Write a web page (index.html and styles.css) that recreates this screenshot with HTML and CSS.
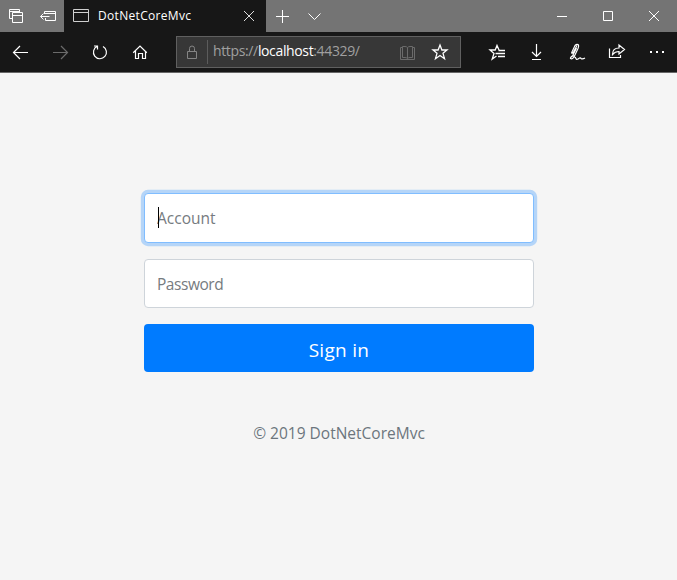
FILE: index.html
```html
<!DOCTYPE html>
<html lang="en">
<head>
<meta charset="utf-8">
<title>DotNetCoreMvc</title>
<link rel="stylesheet" href="styles.css">
</head>
<body>
<header class="titlebar">
  <div class="cell small"><svg width="32" height="32" viewBox="0 0 32 32"><path d="M12 18.500H9.500V9.500H19.500V12M9.500 11.500H19.500M12.500 12.500H22.500V22.500H12.500ZM12.500 15.500H22.500"/></svg></div>
  <div class="cell small"><svg width="32" height="32" viewBox="0 0 32 32"><path d="M12.500 14V11.500H23.500V20.500H13.500V18M12.500 13.500H23.500M8.500 16.500H17.500M11.500 13.500L8.500 16.500L11.500 19.500"/></svg></div>
  <div class="tab">
    <svg class="page-icon" width="16" height="14" viewBox="0 0 16 14"><path d="M.5 .5H15.500V12.500H.5ZM.5 3.500H15.500"/></svg>
    <span class="tab-title">DotNetCoreMvc</span>
    <svg class="tab-close" width="12" height="12" viewBox="0 0 12 12"><path d="M1 1L11 11M11 1L1 11"/></svg>
  </div>
  <div class="cell small"><svg width="32" height="32" viewBox="0 0 32 32"><path d="M16.500 10V23M10 16.500H23"/></svg></div>
  <div class="cell small"><svg width="32" height="32" viewBox="0 0 32 32"><path d="M10.500 13.500L16.500 19.500L22.500 13.500"/></svg></div>
  <div class="window-controls">
    <div class="cell wide"><svg width="46" height="32" viewBox="0 0 46 32"><path d="M18 16.500H28"/></svg></div>
    <div class="cell wide"><svg width="46" height="32" viewBox="0 0 46 32"><path d="M18.500 11.500H27.500V20.500H18.500Z"/></svg></div>
    <div class="cell wide"><svg width="46" height="32" viewBox="0 0 46 32"><path d="M18 11L28 21M28 11L18 21"/></svg></div>
  </div>
</header>
<nav class="toolbar">
  <div class="cell"><svg width="40" height="40" viewBox="0 0 40 40"><path stroke-width="1.200" d="M28 20.500H13.500M20 14L13.500 20.500L20 27"/></svg></div>
  <div class="cell disabled"><svg width="40" height="40" viewBox="0 0 40 40"><path stroke-width="1.200" d="M13 20.500H27.500M21 14L27.500 20.500L21 27"/></svg></div>
  <div class="cell"><svg width="40" height="40" viewBox="0 0 40 40"><path stroke-width="1.200" d="M14 14H17.500V17.500M17.300 14.300A6.500 6.500 0 1 0 23 14.500"/></svg></div>
  <div class="cell"><svg width="40" height="40" viewBox="0 0 40 40"><path stroke-width="1.200" d="M13.200 20.700L20 14L26.800 20.700M15.500 19V26.500H18.500V21.500H22.500V26.500H25.500V19"/></svg></div>
  <div class="address">
    <svg class="lock" width="12" height="15" viewBox="0 0 12 15"><path d="M1.500 6.500H10.500V13.500H1.500ZM3.500 6.500V3.500Q3.500 1 6 1T8.500 3.500V6.500"/></svg>
    <div class="url">https://<b>localhost</b>:44329/</div>
    <svg class="reader" width="16" height="15" viewBox="0 0 16 15"><path d="M7.500 2.500Q6.500 1.500 5 1.500H2.500V12.500H5Q6.500 12.500 7.500 13.500Q8.500 12.500 10 12.500H12.500V1.500H10Q8.500 1.500 7.500 2.500V13.500M2.500 2.500H.5V14.500H14.500V2.500H12.500"/></svg>
    <svg class="star" width="18" height="18" viewBox="0 0 18 18"><path stroke-width="1.300" d="M9 2L10.900 7H16L12 10.300L13.500 15.700L9 12.500L4.500 15.700L6 10.300L2 7H7.100Z"/></svg>
  </div>
  <div class="cell"><svg width="40" height="40" viewBox="0 0 40 40"><path stroke-width="1.300" d="M22 18L20 13.500L18.200 18H13L17 21.500L15.200 27L19.500 24M21.500 18.500H28M18.500 21.500H28M21 24.500H28"/></svg></div>
  <div class="cell"><svg width="40" height="40" viewBox="0 0 40 40"><path stroke-width="1.200" d="M19.500 12V24.500M15 20L19.500 24.500L24 20M15 27.500H24"/></svg></div>
  <div class="cell"><svg width="40" height="40" viewBox="0 0 40 40"><path stroke-width="1.200" d="M14.500 21L18 13.500Q20 11.500 21.500 13Q22 14 21 16.500L17 25Q15.500 27.500 13.500 26.500Q13 25.500 16 23.500L18.500 25.500Q19 28 21 27Q23.500 25 24 26.500Q25.500 27.500 28 26M14.500 21Q15 22 16.500 20L20 13.500M15.500 24L19.500 16"/></svg></div>
  <div class="cell"><svg width="40" height="40" viewBox="0 0 40 40"><path stroke-width="1.200" d="M12.500 16.500V25.500H23.500V23M15.500 22.500Q15.500 16 22 16V13L27.500 17.500L22 22V19.500Q18 19.500 15.500 22.500Z"/></svg></div>
  <div class="cell"><svg width="40" height="40" viewBox="0 0 40 40"><path stroke-width="2" d="M13 20H15M19 20H21M25 20H27"/></svg></div>
</nav>
<main class="page">
  <form class="signin">
    <div class="field">
      <input class="account" type="text" placeholder="Account" aria-label="Account">
      <span class="caret"></span>
    </div>
    <input class="password" type="password" placeholder="Password" aria-label="Password">
    <button type="button"><span>Sign in</span></button>
    <p class="copyright"><span>© 2019 DotNetCoreMvc</span></p>
  </form>
</main>
</body>
</html>
```
FILE: styles.css
```css
* { box-sizing: border-box; }
body {
  margin: 0;
  height: 580px;
  overflow: hidden;
  background: #f5f5f5;
  font-family: "Open Sans", "Noto Sans", sans-serif;
}
svg { display: block; flex: none; fill: none; stroke: #fff; stroke-width: 1; }
.titlebar { display: flex; height: 32px; background: #747474; }
.cell { flex: none; width: 40px; }
.small { width: 32px; }
.wide { width: 46px; }
.tab { display: flex; align-items: center; width: 202px; padding: 0 11px 0 9px; background: #171717; }
.page-icon { stroke: #d0d0d0; margin-right: 9px; }
.tab-title { color: #fff; font-size: 12px; line-height: 16px; letter-spacing: .32px; white-space: nowrap; }
.tab-close { margin-left: auto; stroke: #ddd; }
.window-controls { display: flex; margin-left: auto; }
.toolbar { display: flex; height: 41px; background: #171717; border-bottom: 1px solid #676767; }
.disabled svg { stroke: #6b6b6b; }
.address {
  display: flex;
  align-items: center;
  width: 285px;
  height: 32px;
  margin: 4px 16px 0;
  padding-left: 9px;
  background: #373737;
  border: 1px solid #606060;
}
.lock { stroke: #858585; }
.url {
  width: 193px;
  height: 24px;
  margin-left: 9px;
  padding-left: 5px;
  border-left: 1px solid #5c5c5c;
  color: #a0a0a0;
  font-size: 14px;
  line-height: 22px;
  letter-spacing: -.36px;
}
.url b { color: #fff; font-weight: 400; }
.reader { stroke: #6b6b6b; }
.star { margin-left: 15px; }
.page { padding-top: 120px; }
.signin { width: 390px; margin: 0 auto 0 144px; }
.field { position: relative; margin-bottom: 16px; }
input {
  display: block;
  width: 390px;
  height: 49px;
  padding: 0 12px;
  border: 1px solid #ced4da;
  border-radius: 4px;
  outline: none;
  background: #fff;
  color: #495057;
  font: 15.500px "Open Sans", "Noto Sans", sans-serif;
}
input::placeholder { color: #767b80; opacity: 1; }
.account { height: 50px; border-color: #80bdff; box-shadow: 0 0 0 3.200px #b5d5f8; }
.password { padding-top: 1px; letter-spacing: -.45px; }
.caret { position: absolute; left: 14px; top: 14px; width: 1px; height: 21px; background: #000; }
button {
  display: block;
  width: 390px;
  height: 48px;
  margin-top: 16px;
  padding: 3px 0 0;
  border: 0;
  border-radius: 4px;
  background: #007bff;
  color: #fff;
  font: 19px "Open Sans", "Noto Sans", sans-serif;
  letter-spacing: .3px;
}
.copyright { margin: 49px 0 0; color: #6c757d; font-size: 15.500px; line-height: 24px; text-align: center; }
```
